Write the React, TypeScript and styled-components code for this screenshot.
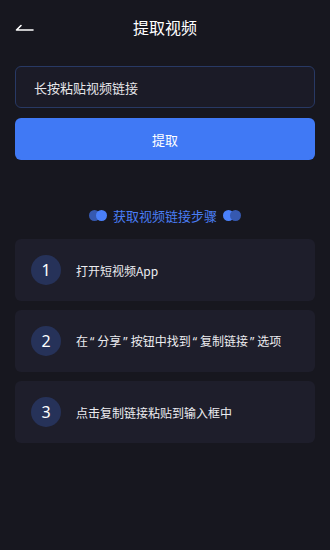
import React from "react";
import styled, { createGlobalStyle } from "styled-components";

const GlobalStyle = createGlobalStyle`
  html, body {
    margin: 0;
    padding: 0;
    background-color: #17171f;
  }
  body {
    font-family: "Noto Sans CJK SC", "Noto Sans", sans-serif;
  }
`;

const Page = styled.div`
  width: 330px;
  min-height: 550px;
  background-color: #17171f;
  box-sizing: border-box;
  padding: 0 15px;
  display: flex;
  flex-direction: column;
`;

const Header = styled.div`
  height: 54px;
  display: flex;
  align-items: center;
  justify-content: center;
  position: relative;
`;

const BackButton = styled.div`
  position: absolute;
  left: 0;
  top: 22px;
  width: 20px;
  height: 10px;
  display: flex;
`;

const Title = styled.h1`
  margin: 0;
  font-size: 16px;
  font-weight: 400;
  color: #ffffff;
`;

const LinkInput = styled.input`
  margin-top: 12px;
  height: 42px;
  box-sizing: border-box;
  width: 100%;
  border: 1px solid #283964;
  border-radius: 6px;
  background-color: #1b1b27;
  padding: 0 18px;
  font-family: inherit;
  font-size: 13px;
  color: #e6e6ea;
  outline: none;

  &::placeholder {
    color: #e6e6ea;
  }
`;

const SubmitButton = styled.button`
  margin-top: 10px;
  height: 42px;
  width: 100%;
  border: none;
  border-radius: 6px;
  background-color: #4079f5;
  color: #ffffff;
  font-family: inherit;
  font-size: 13px;
`;

const SectionTitle = styled.div`
  margin-top: 43px;
  height: 24px;
  display: flex;
  align-items: center;
  justify-content: center;
  gap: 6px;
  color: #4a7ef5;
  font-size: 13px;
`;

const Dots = styled.span<{ $reverse?: boolean }>`
  display: inline-flex;
  flex-direction: ${(p) => (p.$reverse ? "row-reverse" : "row")};

  &::before,
  &::after {
    content: "";
    width: 11px;
    height: 11px;
    border-radius: 50%;
  }
  &::before {
    background-color: #3659b0;
  }
  &::after {
    background-color: #4a80fa;
    margin: ${(p) => (p.$reverse ? "0 -4px 0 0" : "0 0 0 -4px")};
  }
`;

const StepList = styled.div`
  margin-top: 12px;
  display: flex;
  flex-direction: column;
  gap: 9px;
`;

const StepCard = styled.div`
  height: 62px;
  border-radius: 6px;
  background-color: #1e1e2b;
  display: flex;
  align-items: center;
  padding: 0 16px;
  gap: 15px;
`;

const StepNumber = styled.div`
  width: 30px;
  height: 30px;
  border-radius: 50%;
  background-color: #263259;
  color: #ffffff;
  font-family: "Noto Sans", sans-serif;
  font-size: 16px;
  display: flex;
  align-items: center;
  justify-content: center;
  flex-shrink: 0;
`;

const StepText = styled.div`
  color: #ececf0;
  font-size: 12px;
  white-space: nowrap;
`;

const Quote = styled.span`
  font-family: "Noto Sans", sans-serif;
  padding: 0 3px 0 2px;
`;

const App: React.FC = () => {
  return (
    <>
      <GlobalStyle />
      <Page>
        <Header>
          <BackButton>
            <svg width="20" height="10" viewBox="0 0 20 10">
              <path
                d="M1.5 8 L18 8 M1.5 8 L6 3.5"
                stroke="#ffffff"
                strokeWidth="1.6"
                fill="none"
                strokeLinecap="round"
              />
            </svg>
          </BackButton>
          <Title>提取视频</Title>
        </Header>
        <LinkInput placeholder="长按粘贴视频链接" />
        <SubmitButton>提取</SubmitButton>
        <SectionTitle>
          <Dots />
          <span>获取视频链接步骤</span>
          <Dots $reverse />
        </SectionTitle>
        <StepList>
          <StepCard>
            <StepNumber>1</StepNumber>
            <StepText>打开短视频App</StepText>
          </StepCard>
          <StepCard>
            <StepNumber>2</StepNumber>
            <StepText>
              在<Quote>“</Quote>分享<Quote>”</Quote>按钮中找到<Quote>“</Quote>复制链接
              <Quote>”</Quote>选项
            </StepText>
          </StepCard>
          <StepCard>
            <StepNumber>3</StepNumber>
            <StepText>点击复制链接粘贴到输入框中</StepText>
          </StepCard>
        </StepList>
      </Page>
    </>
  );
};

export default App;
